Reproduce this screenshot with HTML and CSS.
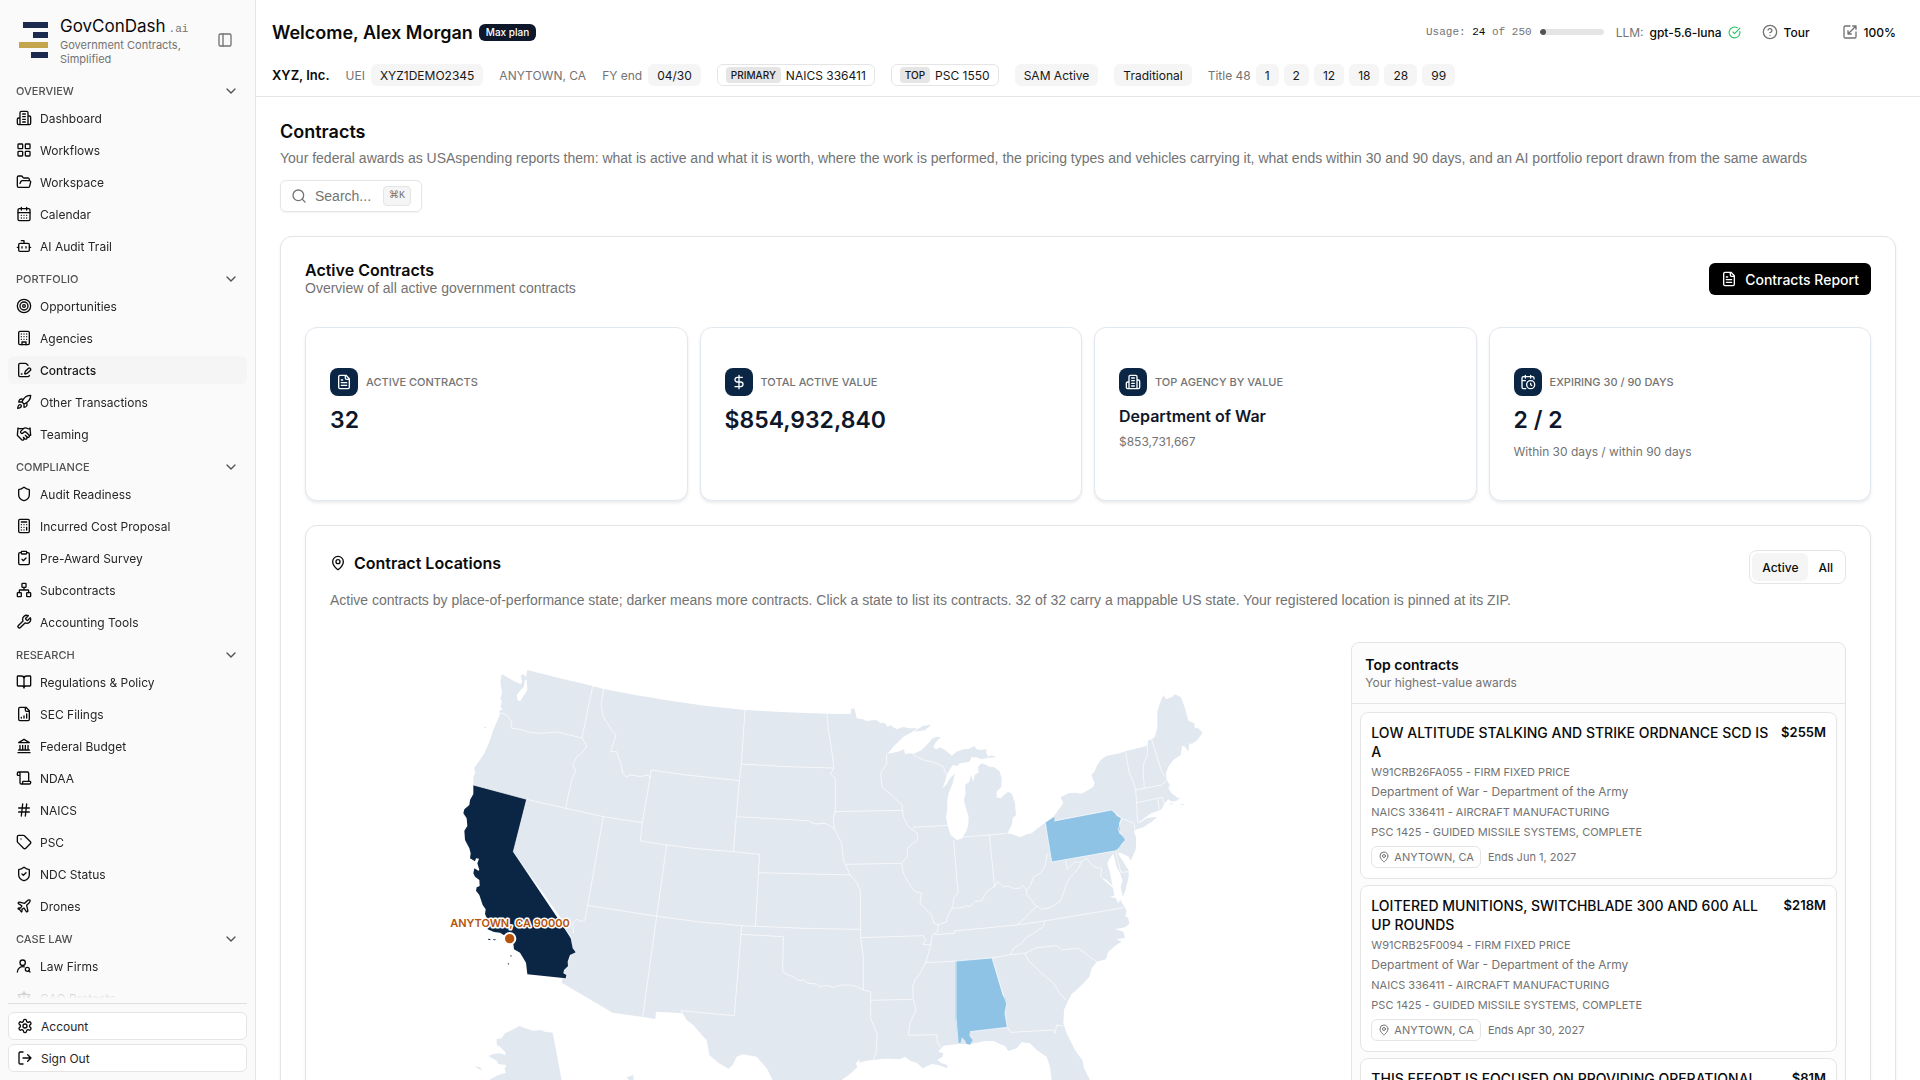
FILE: index.html
```html
<!DOCTYPE html>
<html lang="en">
<head>
<meta charset="utf-8">
<meta name="viewport" content="width=device-width, initial-scale=1">
<title>Contracts - GovConDash</title>
<link rel="stylesheet" href="styles.css">
</head>
<body>
<svg class="sprite" aria-hidden="true">
<symbol id="chev" viewBox="0 0 24 24"><path d="m6 9 6 6 6-6"/></symbol>
<symbol id="building2" viewBox="0 0 24 24"><path d="M6 22V4a2 2 0 0 1 2-2h8a2 2 0 0 1 2 2v18ZM6 12H4a2 2 0 0 0-2 2v6a2 2 0 0 0 2 2h2M18 9h2a2 2 0 0 1 2 2v9a2 2 0 0 1-2 2h-2M10 6h4M10 10h4M10 14h4M10 18h4"/></symbol>
<symbol id="grid" viewBox="0 0 24 24"><rect x="3" y="3" width="7" height="7" rx="1"/><rect x="14" y="3" width="7" height="7" rx="1"/><rect x="14" y="14" width="7" height="7" rx="1"/><rect x="3" y="14" width="7" height="7" rx="1"/></symbol>
<symbol id="folder" viewBox="0 0 24 24"><path d="m6 14 1.5-2.9A2 2 0 0 1 9.24 10H20a2 2 0 0 1 1.94 2.5l-1.54 6a2 2 0 0 1-1.95 1.5H4a2 2 0 0 1-2-2V5a2 2 0 0 1 2-2h3.9a2 2 0 0 1 1.69.9l.81 1.2a2 2 0 0 0 1.67.9H18a2 2 0 0 1 2 2v2"/></symbol>
<symbol id="calendar" viewBox="0 0 24 24"><path d="M8 2v4M16 2v4M3 10h18M8 14h.01M12 14h.01M16 14h.01M8 18h.01M12 18h.01M16 18h.01"/><rect x="3" y="4" width="18" height="18" rx="2"/></symbol>
<symbol id="bot" viewBox="0 0 24 24"><path d="M12 8V4H8M2 14h2M20 14h2M15 13v2M9 13v2"/><rect x="4" y="8" width="16" height="12" rx="2"/></symbol>
<symbol id="target" viewBox="0 0 24 24"><circle cx="12" cy="12" r="10"/><circle cx="12" cy="12" r="6"/><circle cx="12" cy="12" r="2"/></symbol>
<symbol id="building" viewBox="0 0 24 24"><rect x="4" y="2" width="16" height="20" rx="2"/><path d="M9 22v-4h6v4M8 6h.01M16 6h.01M12 6h.01M12 10h.01M12 14h.01M16 10h.01M16 14h.01M8 10h.01M8 14h.01"/></symbol>
<symbol id="filepen" viewBox="0 0 24 24"><path d="m18 5-2.414-2.414A2 2 0 0 0 14.172 2H6a2 2 0 0 0-2 2v16a2 2 0 0 0 2 2h12a2 2 0 0 0 2-2"/><path d="M21.378 12.626a1 1 0 0 0-3.004-3.004l-4.01 4.012a2 2 0 0 0-.506.854l-.837 2.87a.5.5 0 0 0 .62.62l2.87-.837a2 2 0 0 0 .854-.506zM8 18h1"/></symbol>
<symbol id="rocket" viewBox="0 0 24 24"><path d="M4.5 16.5c-1.5 1.26-2 5-2 5s3.74-.5 5-2c.71-.84.7-2.13-.09-2.91a2.18 2.18 0 0 0-2.91-.09zM12 15l-3-3a22 22 0 0 1 2-3.95A12.88 12.88 0 0 1 22 2c0 2.72-.78 7.5-6 11a22.35 22.35 0 0 1-4 2zM9 12H4s.55-3.03 2-4c1.62-1.08 5 0 5 0M12 15v5s3.03-.55 4-2c1.08-1.62 0-5 0-5"/></symbol>
<symbol id="handshake" viewBox="0 0 24 24"><path d="m11 17 2 2a1 1 0 1 0 3-3"/><path d="m14 14 2.5 2.5a1 1 0 1 0 3-3l-3.88-3.88a3 3 0 0 0-4.24 0l-.88.88a1 1 0 1 1-3-3l2.81-2.81a5.79 5.79 0 0 1 7.06-.87l.47.28a2 2 0 0 0 1.42.25L21 4"/><path d="m21 3 1 11h-2M3 3 2 14l6.5 6.5a1 1 0 1 0 3-3M3 4h8"/></symbol>
<symbol id="shield" viewBox="0 0 24 24"><path d="M20 13c0 5-3.5 7.5-7.66 8.95a1 1 0 0 1-.67-.01C7.5 20.5 4 18 4 13V6a1 1 0 0 1 1-1c2 0 4.5-1.2 6.24-2.72a1.17 1.17 0 0 1 1.52 0C14.51 3.81 17 5 19 5a1 1 0 0 1 1 1z"/></symbol>
<symbol id="shieldcheck" viewBox="0 0 24 24"><path d="M20 13c0 5-3.5 7.5-7.66 8.95a1 1 0 0 1-.67-.01C7.5 20.5 4 18 4 13V6a1 1 0 0 1 1-1c2 0 4.5-1.2 6.24-2.72a1.17 1.17 0 0 1 1.52 0C14.51 3.81 17 5 19 5a1 1 0 0 1 1 1zM9 12l2 2 4-4"/></symbol>
<symbol id="calc" viewBox="0 0 24 24"><rect x="4" y="2" width="16" height="20" rx="2"/><path d="M8 6h8M16 14v4M16 10h.01M12 10h.01M8 10h.01M12 14h.01M8 14h.01M12 18h.01M8 18h.01"/></symbol>
<symbol id="clipboard" viewBox="0 0 24 24"><rect x="8" y="2" width="8" height="4" rx="1"/><path d="M16 4h2a2 2 0 0 1 2 2v14a2 2 0 0 1-2 2H6a2 2 0 0 1-2-2V6a2 2 0 0 1 2-2h2M9 14l2 2 4-4"/></symbol>
<symbol id="network" viewBox="0 0 24 24"><rect x="16" y="16" width="6" height="6" rx="1"/><rect x="2" y="16" width="6" height="6" rx="1"/><rect x="9" y="2" width="6" height="6" rx="1"/><path d="M5 16v-3a1 1 0 0 1 1-1h12a1 1 0 0 1 1 1v3M12 12V8"/></symbol>
<symbol id="wrench" viewBox="0 0 24 24"><path d="M14.7 6.3a1 1 0 0 0 0 1.4l1.6 1.6a1 1 0 0 0 1.4 0l3.77-3.77a6 6 0 0 1-7.94 7.94l-6.91 6.91a2.12 2.12 0 0 1-3-3l6.91-6.91a6 6 0 0 1 7.94-7.94l-3.76 3.76z"/></symbol>
<symbol id="book" viewBox="0 0 24 24"><path d="M12 7v14M3 18a1 1 0 0 1-1-1V4a1 1 0 0 1 1-1h5a4 4 0 0 1 4 4 4 4 0 0 1 4-4h5a1 1 0 0 1 1 1v13a1 1 0 0 1-1 1h-6a3 3 0 0 0-3 3 3 3 0 0 0-3-3z"/></symbol>
<symbol id="filechart" viewBox="0 0 24 24"><path d="M15 2H6a2 2 0 0 0-2 2v16a2 2 0 0 0 2 2h12a2 2 0 0 0 2-2V7zM14 2v4a2 2 0 0 0 2 2h4M8 18v-1M12 18v-3M16 18v-6"/></symbol>
<symbol id="landmark" viewBox="0 0 24 24"><path d="M3 22h18M6 18v-7M10 18v-7M14 18v-7M18 18v-7M4 18h16M12 2l8 5H4z"/></symbol>
<symbol id="scroll" viewBox="0 0 24 24"><path d="M19 17V5a2 2 0 0 0-2-2H4M8 21h12a2 2 0 0 0 2-2v-1a1 1 0 0 0-1-1H11a1 1 0 0 0-1 1v1a2 2 0 1 1-4 0V5a2 2 0 1 0-4 0v2a1 1 0 0 0 1 1h3"/></symbol>
<symbol id="hash" viewBox="0 0 24 24"><path d="M4 9h16M4 15h16M10 3 8 21M16 3l-2 18"/></symbol>
<symbol id="tag" viewBox="0 0 24 24"><path d="M12.586 2.586A2 2 0 0 0 11.172 2H4a2 2 0 0 0-2 2v7.172a2 2 0 0 0 .586 1.414l8.704 8.704a2.426 2.426 0 0 0 3.42 0l6.58-6.58a2.426 2.426 0 0 0 0-3.42zM7.5 7.5h.01"/></symbol>
<symbol id="plane" viewBox="0 0 24 24"><path d="M17.8 19.2 16 11l3.5-3.5C21 6 21.5 4 21 3c-1-.5-3 0-4.5 1.5L13 8 4.800 6.200c-.5-.1-.9.1-1.100.5l-.3.5c-.2.5-.1 1 .3 1.300L9 12l-2 3H4l-1 1 3 2 2 3 1-1v-3l3-2 3.500 5.300c.3.4.8.5 1.300.3l.5-.2c.4-.3.600-.7.5-1.200z"/></symbol>
<symbol id="usersearch" viewBox="0 0 24 24"><circle cx="10" cy="7" r="4"/><path d="M2 21a8 8 0 0 1 10.400-7.600"/><circle cx="17" cy="17" r="3"/><path d="m21 21-1.900-1.900"/></symbol>
<symbol id="scale" viewBox="0 0 24 24"><path d="m16 16 3-8 3 8c-.87.65-1.920 1-3 1s-2.130-.35-3-1ZM2 16l3-8 3 8c-.87.65-1.920 1-3 1s-2.130-.35-3-1ZM7 21h10M12 3v18M3 7h2c2 0 5-1 7-2 2 1 5 2 7 2h2"/></symbol>
<symbol id="gear" viewBox="0 0 24 24"><path d="M12.220 2h-.44a2 2 0 0 0-2 2v.18a2 2 0 0 1-1 1.730l-.43.25a2 2 0 0 1-2 0l-.15-.08a2 2 0 0 0-2.730.73l-.22.38a2 2 0 0 0 .73 2.730l.15.1a2 2 0 0 1 1 1.720v.51a2 2 0 0 1-1 1.740l-.15.09a2 2 0 0 0-.73 2.730l.22.38a2 2 0 0 0 2.730.73l.15-.08a2 2 0 0 1 2 0l.43.25a2 2 0 0 1 1 1.730V20a2 2 0 0 0 2 2h.44a2 2 0 0 0 2-2v-.18a2 2 0 0 1 1-1.730l.43-.25a2 2 0 0 1 2 0l.15.08a2 2 0 0 0 2.730-.73l.22-.39a2 2 0 0 0-.73-2.730l-.15-.08a2 2 0 0 1-1-1.740v-.5a2 2 0 0 1 1-1.740l.15-.09a2 2 0 0 0 .73-2.730l-.22-.38a2 2 0 0 0-2.730-.73l-.15.08a2 2 0 0 1-2 0l-.43-.25a2 2 0 0 1-1-1.730V4a2 2 0 0 0-2-2z"/><circle cx="12" cy="12" r="3"/></symbol>
<symbol id="logout" viewBox="0 0 24 24"><path d="M9 21H5a2 2 0 0 1-2-2V5a2 2 0 0 1 2-2h4M16 17l5-5-5-5M21 12H9"/></symbol>
<symbol id="panel" viewBox="0 0 24 24"><rect x="3" y="3" width="18" height="18" rx="2"/><path d="M9 3v18"/></symbol>
<symbol id="search" viewBox="0 0 24 24"><circle cx="11" cy="11" r="8"/><path d="m21 21-4.300-4.300"/></symbol>
<symbol id="pin" viewBox="0 0 24 24"><path d="M20 10c0 4.993-5.539 10.193-7.399 11.799a1 1 0 0 1-1.202 0C9.539 20.193 4 14.993 4 10a8 8 0 0 1 16 0"/><circle cx="12" cy="10" r="3"/></symbol>
<symbol id="filetext" viewBox="0 0 24 24"><path d="M15 2H6a2 2 0 0 0-2 2v16a2 2 0 0 0 2 2h12a2 2 0 0 0 2-2V7zM14 2v4a2 2 0 0 0 2 2h4M10 9H8M16 13H8M16 17H8"/></symbol>
<symbol id="dollar" viewBox="0 0 24 24"><path d="M12 2v20M17 5H9.500a3.500 3.500 0 0 0 0 7h5a3.500 3.500 0 0 1 0 7H6"/></symbol>
<symbol id="calclock" viewBox="0 0 24 24"><path d="M16 14v2.200l1.600 1M16 2v4M21 7.500V6a2 2 0 0 0-2-2H5a2 2 0 0 0-2 2v14a2 2 0 0 0 2 2h3.500M3 10h5M8 2v4"/><circle cx="16" cy="16" r="6"/></symbol>
<symbol id="okcircle" viewBox="0 0 24 24"><path d="M21.801 10A10 10 0 1 1 17 3.335M9 11l3 3L22 4"/></symbol>
<symbol id="help" viewBox="0 0 24 24"><circle cx="12" cy="12" r="10"/><path d="M9.090 9a3 3 0 0 1 5.830 1c0 2-3 3-3 3M12 17h.01"/></symbol>
<symbol id="scaling" viewBox="0 0 24 24"><path d="M12 3H5a2 2 0 0 0-2 2v14a2 2 0 0 0 2 2h14a2 2 0 0 0 2-2v-7M21 3l-12 12M16 3h5v5M14 15H9v-5"/></symbol>
</svg>

<div class="app">
<aside class="sidebar">
  <header class="brand">
    <svg class="brand-mark" viewBox="0 0 30 36" aria-hidden="true"><path fill="#1b2a4e" d="M4 0h25v6H4zM14 10h15v6H14zM12 30h17v6H12z"/><path fill="#c5a44e" d="M0 20h29v6H0z"/></svg>
    <div class="brand-text">
      <p class="brand-name">GovConDash<span class="brand-tld">.ai</span></p>
      <p class="brand-tag">Government Contracts, Simplified</p>
    </div>
    <button class="icon-button" type="button" aria-label="Toggle sidebar"><svg class="icon"><use href="#panel"/></svg></button>
  </header>
  <nav class="nav">
    <section>
      <button class="nav-heading" type="button">Overview<svg class="icon"><use href="#chev"/></svg></button>
      <ul>
        <li><a href="#"><svg class="icon"><use href="#building2"/></svg>Dashboard</a></li>
        <li><a href="#"><svg class="icon"><use href="#grid"/></svg>Workflows</a></li>
        <li><a href="#"><svg class="icon"><use href="#folder"/></svg>Workspace</a></li>
        <li><a href="#"><svg class="icon"><use href="#calendar"/></svg>Calendar</a></li>
        <li><a href="#"><svg class="icon"><use href="#bot"/></svg>AI Audit Trail</a></li>
      </ul>
    </section>
    <section>
      <button class="nav-heading" type="button">Portfolio<svg class="icon"><use href="#chev"/></svg></button>
      <ul>
        <li><a href="#"><svg class="icon"><use href="#target"/></svg>Opportunities</a></li>
        <li><a href="#"><svg class="icon"><use href="#building"/></svg>Agencies</a></li>
        <li><a class="current" href="#" aria-current="page"><svg class="icon"><use href="#filepen"/></svg>Contracts</a></li>
        <li><a href="#"><svg class="icon"><use href="#rocket"/></svg>Other Transactions</a></li>
        <li><a href="#"><svg class="icon"><use href="#handshake"/></svg>Teaming</a></li>
      </ul>
    </section>
    <section>
      <button class="nav-heading" type="button">Compliance<svg class="icon"><use href="#chev"/></svg></button>
      <ul>
        <li><a href="#"><svg class="icon"><use href="#shield"/></svg>Audit Readiness</a></li>
        <li><a href="#"><svg class="icon"><use href="#calc"/></svg>Incurred Cost Proposal</a></li>
        <li><a href="#"><svg class="icon"><use href="#clipboard"/></svg>Pre-Award Survey</a></li>
        <li><a href="#"><svg class="icon"><use href="#network"/></svg>Subcontracts</a></li>
        <li><a href="#"><svg class="icon"><use href="#wrench"/></svg>Accounting Tools</a></li>
      </ul>
    </section>
    <section>
      <button class="nav-heading" type="button">Research<svg class="icon"><use href="#chev"/></svg></button>
      <ul>
        <li><a href="#"><svg class="icon"><use href="#book"/></svg>Regulations &amp; Policy</a></li>
        <li><a href="#"><svg class="icon"><use href="#filechart"/></svg>SEC Filings</a></li>
        <li><a href="#"><svg class="icon"><use href="#landmark"/></svg>Federal Budget</a></li>
        <li><a href="#"><svg class="icon"><use href="#scroll"/></svg>NDAA</a></li>
        <li><a href="#"><svg class="icon"><use href="#hash"/></svg>NAICS</a></li>
        <li><a href="#"><svg class="icon"><use href="#tag"/></svg>PSC</a></li>
        <li><a href="#"><svg class="icon"><use href="#shieldcheck"/></svg>NDC Status</a></li>
        <li><a href="#"><svg class="icon"><use href="#plane"/></svg>Drones</a></li>
      </ul>
    </section>
    <section>
      <button class="nav-heading" type="button">Case Law<svg class="icon"><use href="#chev"/></svg></button>
      <ul>
        <li><a href="#"><svg class="icon"><use href="#usersearch"/></svg>Law Firms</a></li>
        <li><a href="#"><svg class="icon"><use href="#scale"/></svg>GAO Protests</a></li>
      </ul>
    </section>
  </nav>
  <footer class="side-foot">
    <a href="#"><svg class="icon"><use href="#gear"/></svg>Account</a>
    <button type="button"><svg class="icon"><use href="#logout"/></svg>Sign Out</button>
  </footer>
</aside>

<div class="page">
  <header class="topbar">
    <div class="top-row">
      <p class="welcome">Welcome, Alex Morgan</p><span class="plan">Max plan</span>
      <div class="tools">
        <span class="usage">Usage: <b>24</b> of 250</span><span class="meter"><span class="meter-fill" style="width:10%"></span></span>
        <span class="llm">LLM: <b>gpt-5.6-luna</b><svg class="icon ok"><use href="#okcircle"/></svg></span>
        <button class="tool" type="button"><svg class="icon"><use href="#help"/></svg>Tour</button>
        <button class="tool zoom" type="button"><svg class="icon"><use href="#scaling"/></svg>100%</button>
      </div>
    </div>
    <div class="company">
      <strong>XYZ, Inc.</strong>
      <span class="pair">UEI <span class="chip">XYZ1DEMO2345</span></span>
      <span>ANYTOWN, CA</span>
      <span class="pair">FY end <span class="chip">04/30</span></span>
      <span class="chip outline"><em>PRIMARY</em>NAICS 336411</span>
      <span class="chip outline"><em>TOP</em>PSC 1550</span>
      <span class="chip">SAM Active</span>
      <span class="chip">Traditional</span>
      <span class="pair titles">Title 48 <span class="chip">1</span><span class="chip">2</span><span class="chip">12</span><span class="chip">18</span><span class="chip">28</span><span class="chip">99</span></span>
    </div>
  </header>

  <main class="content">
    <h1>Contracts</h1>
    <p class="lead">Your federal awards as USAspending reports them: what is active and what it is worth, where the work is performed, the pricing types and vehicles carrying it, what ends within 30 and 90 days, and an AI portfolio report drawn from the same awards</p>
    <button class="search" type="button"><svg class="icon"><use href="#search"/></svg>Search...<kbd>⌘K</kbd></button>

    <section class="card active-card">
      <header class="card-head">
        <div><h2>Active Contracts</h2><p class="sub">Overview of all active government contracts</p></div>
        <button class="primary" type="button"><svg class="icon"><use href="#filetext"/></svg>Contracts Report</button>
      </header>
      <div class="stats">
        <article class="card stat"><h3><span class="badge"><svg class="icon"><use href="#filetext"/></svg></span>Active Contracts</h3><p class="big">32</p></article>
        <article class="card stat"><h3><span class="badge"><svg class="icon"><use href="#dollar"/></svg></span>Total Active Value</h3><p class="big">$854,932,840</p></article>
        <article class="card stat"><h3><span class="badge"><svg class="icon"><use href="#building2"/></svg></span>Top Agency by Value</h3><p class="mid">Department of War</p><p class="note">$853,731,667</p></article>
        <article class="card stat"><h3><span class="badge"><svg class="icon"><use href="#calclock"/></svg></span>Expiring 30 / 90 Days</h3><p class="big">2 / 2</p><p class="note">Within 30 days / within 90 days</p></article>
      </div>

      <section class="card locations">
        <header class="loc-head">
          <h2><svg class="icon"><use href="#pin"/></svg>Contract Locations</h2>
          <div class="toggle"><button class="on" type="button" aria-pressed="true">Active</button><button type="button" aria-pressed="false">All</button></div>
        </header>
        <p class="loc-note">Active contracts by place-of-performance state; darker means more contracts. Click a state to list its contracts. 32 of 32 carry a mappable US state. Your registered location is pinned at its ZIP.</p>
        <div class="loc-body">
          <svg class="map" viewBox="-270 6 2968 1560" role="img" aria-label="Contracts by state">
            <g class="land">
              <path d="M245 102 262 112 283 124 303 133 306 122 302 107 310 102 318 112 322 90 420 115 518 138 551 147 650 166 750 182 860 198 975 210 1100 217 1221 221 1292 222 1294 205 1304 206 1310 235 1322 237 1325 242V1265L1318 1258 1308 1270 1312 1282 1290 1302 1265 1320 1220 1345 1185 1375 1165 1410 1168 1470 1120 1455 1095 1400 1058 1320 1040 1285 1010 1250 968 1243 950 1250 938 1275 925 1286 895 1268 868 1245 860 1200 850 1190 820 1155 800 1140 788 1120 708 1115 706 1137 668 1131 578 1118 425 1028 430 1000 460 930 420 830 280 635 320 478 160 435 160 410 166 400 162 385 190 345 207 308 220 270 240 222 237 213 248 208 241 200 246 185 241 177 246 160 241 125Z"/>
              <path d="M-2 238 10 238 20 243 38 241 50 240 62 250 75 249 82 260 92 256 100 262 112 268 125 262 135 262 145 265 172 265 150 280 130 290 115 305 100 320 88 335 80 342 100 338 120 333 132 328 135 343 148 340 160 342 185 330 205 310 218 295 230 290 243 292 228 305 220 322 228 328 240 322 255 330 265 338 275 347 290 335 310 328 325 327 345 318 348 327 362 330 380 327 378 338 385 350 395 346 408 352 385 353 362 358 350 352 335 352 328 365 310 368 300 370 292 378 278 375 262 400 255 425 247 445 258 435 268 418 285 400 278 430 266 460 262 480 262 510 258 530 264 560 272 585 290 600 305 596 318 575 325 555 326 530 318 505 312 480 317 460 315 435 328 425 333 405 340 425 344 405 356 397 354 380 365 370 378 375 392 382 400 380 418 392 425 415 424 440 410 455 410 472 422 475 432 465 445 455 456 462 465 490 468 525 458 535 455 555 442 580 455 582 480 592 500 583 515 580 530 567 545 556 556 548 580 530 595 510 610 490 602 472 625 460 645 458 665 461 685 450 700 440 704 430 694 405 703 395 712 375 722 360 740 347 770 342 800 333 862 317 865 300 875 298 884 292 892 265 892 215 898 195 910 165 918 178 935 172 945 163 963 172 975 205 985 242 1003 250 1004 264 1015 265 1028 278 1012 300 995 312 988 310 985 335 975 320 966 318 962 345 940 360 925 380 918 400 920 420 930 435 925 445 935 460 955 475 965 470 950 482 935 485 925 478 912 492 905 508 870 522 838 545 833 552 860 535 892 530 875 545 850 562 830 568 822 575 828 590 828 625 820 645 812 662 806 650 785 640 774 637 778 648 790 665 800 682 806 690 806 712 800 735 797 750 788 770 782 740 788 722 780 700 770 680 760 640 748 660 750 685 762 705 768 725 765 745 740 720 722 712 755 740 770 752 768 765 750 770 780 778 790 795 800 812 796 828 805 835 808 852 795 862 765 868 790 875 795 893 770 898 785 905 765 918 745 935 738 958 710 965 695 985 688 1010 665 1035 655 1045 635 1062 625 1080 612 1110 610 1150 620 1180 645 1230 668 1262 672 1285 690 1320 720 1375 735 1440 725 1490 700 1480 670 1430 640 1400 610 1360 590 1325 575 1320 570 1280 560 1250 530 1230 510 1210 485 1207 470 1225 445 1233 435 1218 420 1212 400 1203 370 1204 335 1212 295 1212 270 1215 250 1217 235 1235 250 1240 248 1250 232 1260 245 1270 262 1275 262 1285 235 1275 215 1272 188 1285 170 1268 150 1262 135 1250 120 1258 90 1256 70 1256 40 1260 15 1263 -2 1268Z" transform="translate(1320)"/>
              <path d="M207 1320 235 1305 258 1298 254 1288 258 1275 235 1272 230 1262 205 1248 220 1242 240 1240 258 1246 255 1235 240 1220 230 1215 230 1198 245 1195 255 1180 280 1168 298 1158 312 1163 340 1172 362 1170 375 1175 398 1178 425 1320 450 1440 520 1500 420 1450 340 1430 250 1480 140 1520 240 1450 200 1400ZM165 1279 180 1282 187 1291 176 1287ZM620 1312 640 1305 641 1320 628 1322ZM190 261h10l-3 4z"/>
              <path d="m1480 275 30-18 24-2-20 16zM2278 495l12-4 3 4zM2245 494l12-5 2 4z"/>
            </g>
            <path class="water" d="M290 165 302 150 312 140 314 122 320 118 322 150 310 168 302 182 294 182ZM2068 655l-6 16 8 26 5 28 8 40 12 25 6-12-4-20 3-25-6-22-12-20-8-20z"/>
            <path class="high" d="M160 435 320 478 280 635 412 832 440 875 452 895 458 925 467 937 450 945 443 965 444 978 432 990 430 1000 439 1005 437 1015 322 1003 318 968 310 955 300 938 282 928 280 912 262 892 250 884 240 878 222 876 203 868 203 840 195 822 197 808 188 795 178 765 168 752 170 742 179 738 178 720 165 710 160 700 163 685 175 692 178 690 172 670 177 656 168 655 165 664 150 655 152 640 148 625 135 600 133 572 142 558 140 535 130 520 133 508 148 495 150 480 160 462ZM205 896l6 1v3h-6zM218 897l12 2-8 2zM270 946l6 1-3 3zM262 971l5-1v4z"/>
            <path class="low" d="M1876 548 1902 531 1905 543 2075 510 2085 520 2090 528 2103 535 2097 550 2100 562 2097 580 2110 588 2117 600 2105 612 2098 625 2085 632 1895 666ZM1606 963 1716 954 1735 1020 1748 1065 1758 1078 1760 1092 1755 1120 1762 1162 1650 1175 1648 1188 1658 1200 1650 1214 1640 1212 1634 1200 1625 1192 1622 1208 1614 1210 1606 1130Z"/>
            <path class="border" d="M240 218 262 226 275 245 275 265 300 268 325 276 360 280 412 276 486 294M518 138 486 294 500 318 485 340 470 350 458 375 467 390 455 420 437 503M160 435 320 478 437 505 550 530 667 548 690 415M551 147 543 195 550 230 575 270 588 285 580 310 572 335 590 335 605 380 608 400 618 410 635 405 660 410 685 405 690 415 693 390 800 405 958 422M667 548 661 603 740 615 830 626 940 635M975 210 964 372 958 422 949 530 940 635 1019 643 1006 858M964 372 1100 380 1242 384M1221 221 1225 270 1235 330 1242 384 1232 402 1246 415 1246 515 1240 530 1243 565 1265 610 1270 660 1290 705 1310 725 1321 752 1322 893 1330 950 1330 1050M949 530 1165 542 1185 552 1215 550 1243 565M1241 515 1446 511M1277 673 1445 670M1017 698 1290 705M320 478 280 635 455 895M550 530 503 796 495 840 487 845 470 838 458 850 461 880M503 796 710 829 840 846 965 857 1150 865 1320 868M740 615 710 829 668 1131M965 857 943 1127 782 1112 788 1122M962 883 1090 890 1088 995 1105 1005 1120 1010 1135 1022 1150 1020 1165 1030 1190 1032 1200 1040 1220 1036 1240 1042 1265 1035 1290 1035 1310 1040 1330 1050 1352 1055 1352 1135 1372 1185 1368 1240 1360 1260M1322 893 1510 887 1517 900 1508 913 1532 915M1352 1081 1478 1078"/>
            <path class="border" transform="translate(1320)" d="M80 342V372L62 400 66 440 100 470 126 495 130 530 145 560 172 580 172 600 142 625 142 650 125 670 130 700 150 735 165 755 185 760 180 790 215 825 222 850 235 855 232 875 217 885 212 915 200 960 190 980 180 1000 165 1020 158 1040 160 1078 168 1110 150 1150 145 1186 230 1184 232 1205 242 1222M158 562 264 556M160 345 190 360 215 365 235 372 250 380 258 405M281 600 291 725 295 755 282 775 278 800 262 830 260 845 235 855M300 592 388 585 440 580M388 585 404 740M275 805 305 803 320 797 330 800 345 785 365 782 375 765 385 750 404 740 412 725 430 740 445 738 460 745 480 745 490 737 500 752 500 765 515 780 525 795 545 808M500 752 512 735 520 712 540 700 555 680 562 640M556 548 575 666 770 632 797 600 775 570 785 535 755 510 582 543M785 535 822 550 828 590M545 808 570 803 600 785 612 755 620 730 632 710 642 700 655 685 665 665M617 663 622 688 645 665 660 668 680 655 690 668 705 682 725 685 722 712M530 798 495 835 470 855M225 884 283 880 283 873 470 855 553 843 790 803M553 843 552 858 535 870 520 880 500 892 485 910 460 925 452 944M197 968 290 963 396 954 452 944 495 940 530 923 590 917 605 930 655 925 710 965M288 963V1130L295 1212M396 954 430 1065 440 1090 435 1120 442 1162 330 1175M442 1162 452 1177 580 1170 585 1180 590 1155 610 1158M495 940 505 962 520 975 545 1000 580 1030 600 1060 617 1080M797 337 808 400 818 420 827 450 830 490 833 548M862 317 862 345 850 375 850 405 853 443M827 450 905 435 918 422M875 298 905 395 915 410M830 488 893 475 908 472 912 490M893 475 898 508M768 637 782 697 806 695"/>
            <circle class="home" cx="269" cy="896" r="17"/>
            <text class="home-label" x="270" y="862" text-anchor="middle">ANYTOWN, CA 90000</text>
          </svg>
          <aside class="top">
            <header><h3>Top contracts</h3><p>Your highest-value awards</p></header>
            <ul>
              <li><div class="award"><h4>LOW ALTITUDE STALKING AND STRIKE ORDNANCE SCD IS A</h4><strong>$255M</strong></div>
                <p>W91CRB26FA055 - FIRM FIXED PRICE</p><p class="dept">Department of War - Department of the Army</p><p>NAICS 336411 - AIRCRAFT MANUFACTURING</p><p>PSC 1425 - GUIDED MISSILE SYSTEMS, COMPLETE</p>
                <div class="place"><span class="pill"><svg class="icon"><use href="#pin"/></svg>ANYTOWN, CA</span>Ends Jun 1, 2027</div></li>
              <li><div class="award"><h4>LOITERED MUNITIONS, SWITCHBLADE 300 AND 600 ALL UP ROUNDS</h4><strong>$218M</strong></div>
                <p>W91CRB25F0094 - FIRM FIXED PRICE</p><p class="dept">Department of War - Department of the Army</p><p>NAICS 336411 - AIRCRAFT MANUFACTURING</p><p>PSC 1425 - GUIDED MISSILE SYSTEMS, COMPLETE</p>
                <div class="place"><span class="pill"><svg class="icon"><use href="#pin"/></svg>ANYTOWN, CA</span>Ends Apr 30, 2027</div></li>
              <li><div class="award"><h4>THIS EFFORT IS FOCUSED ON PROVIDING OPERATIONAL</h4><strong>$81M</strong></div></li>
            </ul>
          </aside>
        </div>
      </section>
    </section>
  </main>
</div>
</div>
</body>
</html>
```
FILE: styles.css
```css
*, *::before, *::after { box-sizing: border-box; }
body, h1, h2, h3, h4, p, ul { margin: 0; padding: 0; }
ul { list-style: none; }
a { color: inherit; text-decoration: none; }
button { font: inherit; color: inherit; background: none; border: 0; padding: 0; margin: 0; cursor: pointer; }
body { font-family: Inter, "Liberation Sans", sans-serif; font-size: 14px; color: #0a0a0a; background: #fff; }

.sprite { display: none; }
.icon { width: 16px; height: 16px; flex: none; fill: none; stroke: currentColor; stroke-width: 2; stroke-linecap: round; stroke-linejoin: round; }

.app { display: flex; height: 100vh; }

/* Sidebar */
.sidebar { width: 256px; flex: none; display: flex; flex-direction: column; background: #fafafa; border-right: 1px solid #e5e5e5; }
.brand { display: flex; align-items: center; gap: 11px; height: 72px; flex: none; padding: 8px 22px 0 19px; }
.brand-mark { width: 30px; height: 36px; flex: none; }
.brand-text { flex: 1; }
.brand-name { font-size: 17px; line-height: 24px; white-space: nowrap; }
.brand-tld { font: 11px "Liberation Mono", monospace; color: #737373; margin-left: 3px; }
.brand-tag { font-size: 11px; line-height: 14px; color: #737373; width: 136px; }
.icon-button { display: flex; color: #737373; }

.nav { flex: 1; min-height: 0; overflow: hidden; padding: 0 8px; -webkit-mask-image: linear-gradient(to top, transparent 4px, #000 32px); mask-image: linear-gradient(to top, transparent 4px, #000 32px); }
.nav section { padding-top: 6px; }
.nav-heading { display: flex; align-items: center; justify-content: space-between; width: 100%; height: 26px; padding: 0 8px; font-size: 11px; font-weight: 500; text-transform: uppercase; color: #525252; }
.nav ul { display: grid; gap: 4px; }
.nav a { display: flex; align-items: center; gap: 8px; height: 28px; padding: 0 8px; border-radius: 6px; font-size: 12px; color: #262626; }
.nav a .icon, .side-foot .icon { color: #0a0a0a; }
.nav a.current { background: #f5f5f5; font-weight: 500; color: #171717; }
.side-foot { margin: 0 8px; padding: 8px 0; border-top: 1px solid #e0e0e0; display: grid; gap: 4px; }
.side-foot a, .side-foot button { display: flex; align-items: center; gap: 8px; height: 28px; padding: 0 8px; background: #fff; border: 1px solid #e5e5e5; border-radius: 6px; font-size: 12px; color: #262626; }

/* Top bar */
.page { flex: 1; min-width: 0; display: flex; flex-direction: column; }
.topbar { padding: 20px 24px 10px 16px; border-bottom: 1px solid #e5e5e5; }
.top-row { display: flex; align-items: center; gap: 6px; height: 24px; }
.welcome { font-size: 18px; font-weight: 600; }
.plan { padding: 0 7px; border-radius: 6px; background: #0f172a; color: #fff; font-size: 10px; font-weight: 500; line-height: 17px; }
.tools { margin-left: auto; display: flex; align-items: center; font-size: 12px; color: #737373; }
.tools b { font-weight: 500; color: #0a0a0a; }
.usage { font: 11px "Liberation Mono", monospace; }
.meter { width: 64px; height: 6px; margin: 0 12px 0 8px; border-radius: 3px; background: #e5e5e5; overflow: hidden; }
.meter-fill { display: block; height: 100%; border-radius: 3px; background: #525252; }
.llm { display: flex; align-items: center; gap: 6px; }
.ok { width: 13px; height: 13px; color: #22c55e; }
.tool { display: flex; align-items: center; gap: 6px; margin-left: 21px; font-weight: 500; color: #0a0a0a; }
.tool .icon { color: #737373; }
.zoom { margin-left: 32px; }
.company { display: flex; align-items: center; gap: 16px; margin-top: 20px; height: 22px; font-size: 12px; color: #737373; white-space: nowrap; }
.company strong { font-size: 13px; font-weight: 600; color: #0a0a0a; }
.pair { display: flex; align-items: center; gap: 6px; }
.titles { gap: 5px; }
.chip { display: inline-flex; align-items: center; height: 22px; padding: 0 9px; border-radius: 6px; background: #f5f5f5; color: #171717; }
.chip.outline { background: #fff; border: 1px solid #e5e5e5; padding: 0 8px; gap: 5px; }
.chip em { font-style: normal; font-size: 10px; font-weight: 500; line-height: 16px; padding: 0 5px; border-radius: 4px; background: #e5e5e5; }

/* Page content */
.content { flex: 1; min-height: 0; overflow-y: auto; scrollbar-width: none; padding: 24px; }
h1 { font-size: 18px; font-weight: 600; line-height: 22px; }
.lead, .sub, .loc-note, .search { font-family: "Liberation Sans", Arial, sans-serif; font-size: 14px; color: #737373; }
.lead { margin-top: 5px; line-height: 20px; }
.search { display: flex; align-items: center; gap: 8px; height: 32px; margin: 12px 0 24px; padding: 0 10px; border: 1px solid #e5e5e5; border-radius: 6px; box-shadow: 0 1px 2px rgba(0,0,0,.05); }
.search kbd { margin-left: 4px; padding: 0 5px; border: 1px solid #e5e5e5; border-radius: 4px; background: #f5f5f5; font: 10px/18px "Liberation Mono", "DejaVu Sans", monospace; }
.card { background: #fff; border: 1px solid #e5e5e5; border-radius: 12px; box-shadow: 0 1px 3px rgba(0,0,0,.06); }
.active-card { padding: 24px; }
.card-head { display: flex; align-items: center; justify-content: space-between; height: 36px; }
h2 { font-size: 16px; font-weight: 600; line-height: 18px; }
.sub { line-height: 18px; }
.primary { display: flex; align-items: center; gap: 8px; height: 32px; padding: 0 12px; border-radius: 6px; background: #000; color: #fff; font-weight: 500; }

.stats { display: grid; grid-template-columns: repeat(4, 1fr); gap: 12px; margin: 30px 0 24px; }
.stat { min-height: 174px; padding: 40px 24px; border-color: #e2e8f0; box-shadow: 0 2px 3px rgba(15,23,42,.09); color: #0f172a; }
.stat h3 { display: flex; align-items: center; gap: 8px; font-size: 11px; font-weight: 500; text-transform: uppercase; color: #737373; }
.badge { display: grid; place-items: center; width: 28px; height: 28px; border-radius: 8px; background: #0b2545; color: #fff; }
.big { margin-top: 8px; font-size: 23px; font-weight: 600; line-height: 32px; }
.mid { margin-top: 8px; font-size: 16px; font-weight: 600; line-height: 24px; }
.note { margin-top: 6px; font-size: 12px; line-height: 16px; color: #737373; }
.big + .note { margin-top: 8px; }

.locations { padding: 24px; }
.loc-head { display: flex; align-items: flex-start; justify-content: space-between; }
.loc-head h2 { display: flex; align-items: center; gap: 8px; line-height: 26px; }
.toggle { display: flex; padding: 2px; border: 1px solid #e5e5e5; border-radius: 8px; font-size: 12px; font-weight: 500; }
.toggle button { height: 28px; padding: 0 10px; border-radius: 6px; }
.toggle .on { background: #f5f5f5; }
.loc-note { margin: 6px 0 32px; line-height: 20px; }
.loc-body { display: grid; grid-template-columns: 2fr 1fr; gap: 32px; align-items: start; }
.map { display: block; width: 100%; height: auto; }
.land { fill: #e2e8f0; }
.water { fill: #fff; }
.high { fill: #0b2545; }
.low { fill: #8ec3e6; }
.border { fill: none; stroke: #fff; stroke-width: 2; stroke-linejoin: round; }
.home { fill: #b45309; stroke: #fff; stroke-width: 6; }
.home-label { font-size: 33px; font-weight: 600; fill: #b45309; stroke: #fff; stroke-width: 9; stroke-linejoin: round; paint-order: stroke; }

.top { border: 1px solid #e5e5e5; border-radius: 8px; background: #fcfcfc; overflow: hidden; }
.top header { padding: 12px 13px; border-bottom: 1px solid #e5e5e5; }
.top h3 { font-size: 14px; font-weight: 600; line-height: 20px; }
.top header p { font-size: 12px; line-height: 16px; color: #737373; }
.top ul { display: grid; gap: 6px; padding: 8px; }
.top li { padding: 10px; border: 1px solid #e5e5e5; border-radius: 8px; background: #fff; font-size: 11px; line-height: 20px; color: #737373; }
.award { display: flex; justify-content: space-between; gap: 8px; margin-bottom: 1px; color: #0a0a0a; line-height: 19px; }
.award h4 { font-size: 14px; font-weight: 500; }
.award strong { font-size: 13px; font-weight: 600; }
.dept { font-size: 12px; }
.place { display: flex; align-items: center; gap: 7px; margin-top: 4px; }
.pill { display: inline-flex; align-items: center; gap: 4px; height: 22px; padding: 0 6px; border: 1px solid #e5e5e5; border-radius: 6px; }
.pill .icon { width: 12px; height: 12px; }
```
